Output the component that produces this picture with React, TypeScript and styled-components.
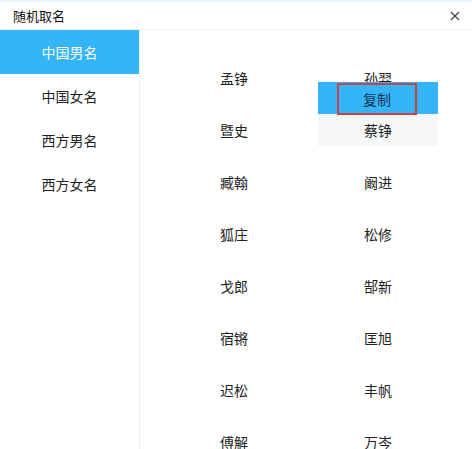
import { Fragment, useState } from 'react';
import styled, { createGlobalStyle } from 'styled-components';

const GlobalStyle = createGlobalStyle`
  html, body {
    margin: 0;
    padding: 0;
    background: #fff;
  }
  body {
    font-family: "Noto Sans CJK SC", "Noto Sans", sans-serif;
    color: #222;
  }
`;

const Window = styled.div`
  width: 472px;
  height: 449px;
  display: flex;
  flex-direction: column;
  overflow: hidden;
  border-top: 2px solid #eaf6fd;
  box-sizing: border-box;
`;

const TitleBar = styled.div`
  height: 27px;
  flex-shrink: 0;
  display: flex;
  align-items: center;
  justify-content: space-between;
  padding: 0 10px 0 13px;
  border-bottom: 1px solid #f0f1f3;
  font-size: 13px;
  line-height: 1;
  color: #111;
  button {
    border: 0;
    background: transparent;
    padding: 0;
    width: 14px;
    height: 14px;
    display: flex;
    align-items: center;
    justify-content: center;
    cursor: pointer;
  }
`;

const Body = styled.div`
  flex: 1;
  display: flex;
  min-height: 0;
`;

const Sidebar = styled.ul`
  width: 139px;
  flex-shrink: 0;
  margin: 0;
  padding: 0;
  list-style: none;
  border-right: 1px solid #eef0f2;
`;

const NavItem = styled.li<{ $active?: boolean }>`
  height: 44px;
  display: flex;
  align-items: center;
  justify-content: center;
  font-size: 14px;
  line-height: 1;
  background: ${({ $active }) => ($active ? '#33b5f8' : 'transparent')};
  color: ${({ $active }) => ($active ? '#fff' : '#222')};
  cursor: pointer;
`;

const NameGrid = styled.div`
  flex: 1;
  display: grid;
  grid-template-columns: 120px 120px;
  grid-auto-rows: 32px;
  column-gap: 24px;
  row-gap: 20px;
  padding: 32px 0 0 34px;
  align-content: start;
`;

const NameCell = styled.div<{ $hover?: boolean }>`
  position: relative;
  display: flex;
  align-items: center;
  justify-content: center;
  font-size: 14px;
  line-height: 1;
  color: #222;
  background: ${({ $hover }) => ($hover ? '#f5f6f8' : 'transparent')};
`;

const Menu = styled.div`
  position: absolute;
  top: 20px;
  left: 0;
  width: 120px;
  height: 32px;
  background: #33b5f8;
  z-index: 2;
`;

const MenuItem = styled.div`
  position: absolute;
  top: 1px;
  left: 19px;
  width: 80px;
  height: 32px;
  box-sizing: border-box;
  border: 2px solid #c9424b;
  display: flex;
  align-items: center;
  justify-content: center;
  font-size: 14px;
  line-height: 1;
  color: #1a3550;
`;

const names = [
  ['孟铮', '孙羿'],
  ['暨史', '蔡铮'],
  ['臧翰', '阚进'],
  ['狐庄', '松修'],
  ['戈郎', '郜新'],
  ['宿锵', '匡旭'],
  ['迟松', '丰帆'],
  ['傅解', '万岑'],
];

const tabs = ['中国男名', '中国女名', '西方男名', '西方女名'];

function App() {
  const [active, setActive] = useState(0);

  return (
    <>
      <GlobalStyle />
      <Window>
        <TitleBar>
          <span>随机取名</span>
          <button aria-label='close'>
            <svg width='10' height='10' viewBox='0 0 10 10'>
              <path d='M1 1L9 9M9 1L1 9' stroke='#444' strokeWidth='1.3' />
            </svg>
          </button>
        </TitleBar>
        <Body>
          <Sidebar>
            {tabs.map((t, i) => (
              <NavItem key={t} $active={i === active} onClick={() => setActive(i)}>
                {t}
              </NavItem>
            ))}
          </Sidebar>
          <NameGrid>
            {names.map(([a, b], row) => (
              <Fragment key={a}>
                <NameCell>{a}</NameCell>
                <NameCell $hover={row === 1}>
                  {b}
                  {row === 0 && (
                    <Menu>
                      <MenuItem>复制</MenuItem>
                    </Menu>
                  )}
                </NameCell>
              </Fragment>
            ))}
          </NameGrid>
        </Body>
      </Window>
    </>
  );
}

export default App;
